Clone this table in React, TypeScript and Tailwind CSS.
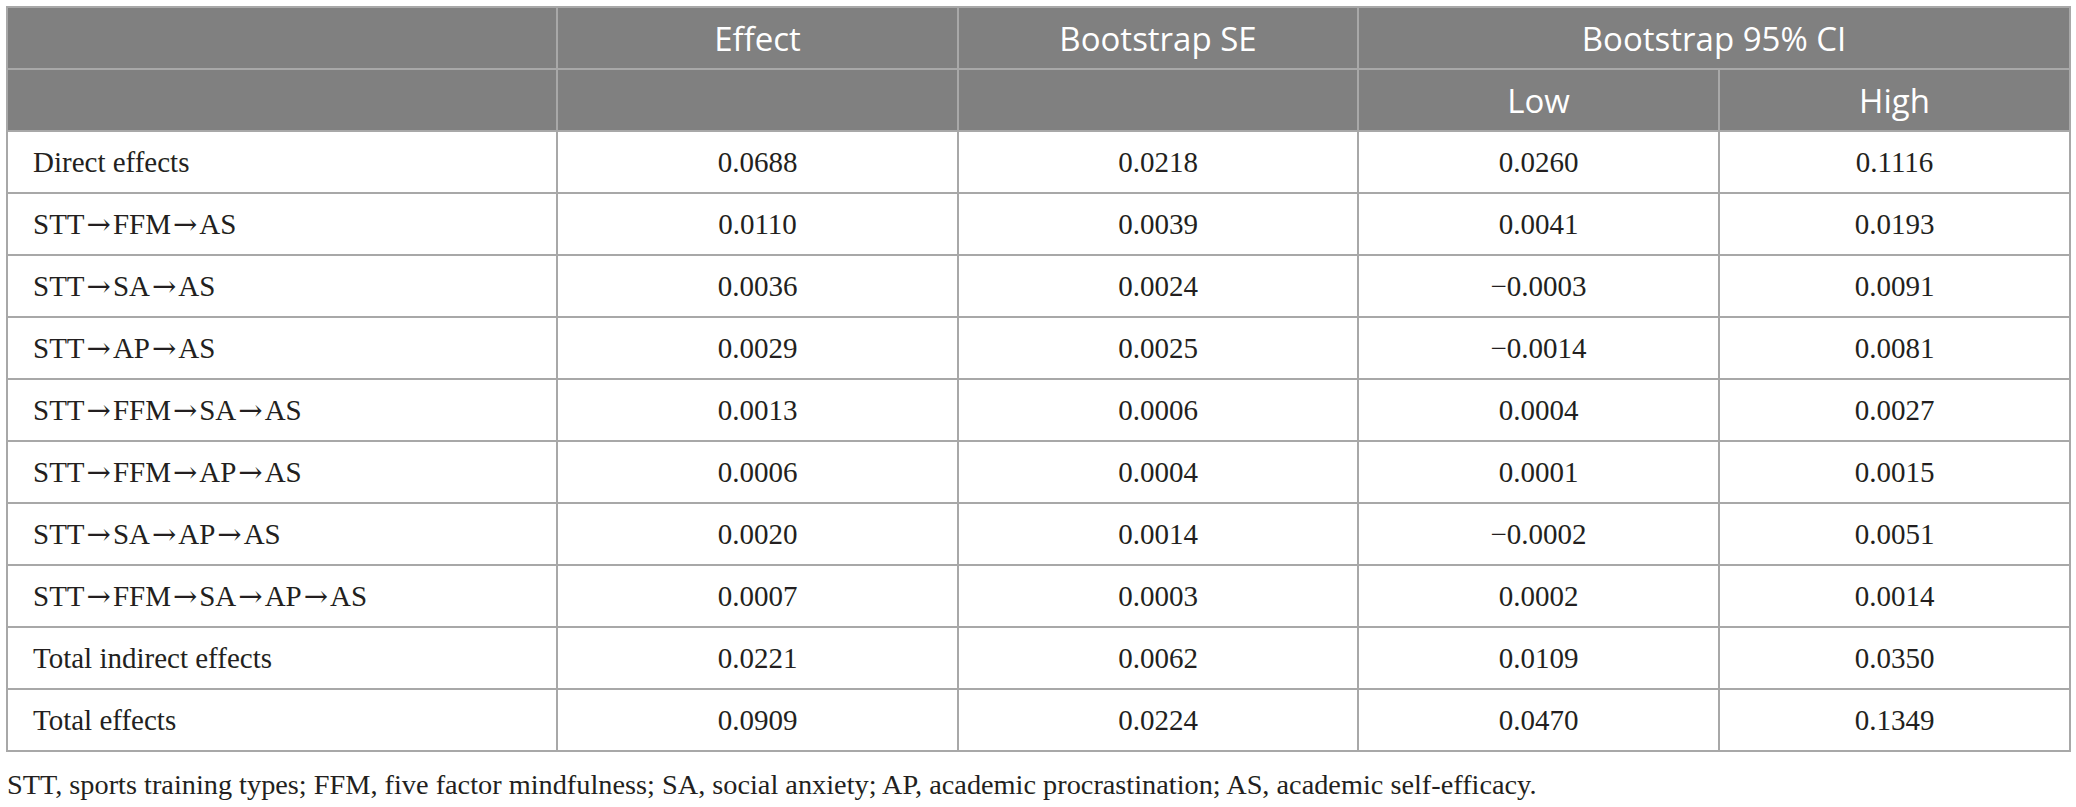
const rows: [string, string, string, string, string][] = [
  ['Direct effects', '0.0688', '0.0218', '0.0260', '0.1116'],
  ['STT→FFM→AS', '0.0110', '0.0039', '0.0041', '0.0193'],
  ['STT→SA→AS', '0.0036', '0.0024', '−0.0003', '0.0091'],
  ['STT→AP→AS', '0.0029', '0.0025', '−0.0014', '0.0081'],
  ['STT→FFM→SA→AS', '0.0013', '0.0006', '0.0004', '0.0027'],
  ['STT→FFM→AP→AS', '0.0006', '0.0004', '0.0001', '0.0015'],
  ['STT→SA→AP→AS', '0.0020', '0.0014', '−0.0002', '0.0051'],
  ['STT→FFM→SA→AP→AS', '0.0007', '0.0003', '0.0002', '0.0014'],
  ['Total indirect effects', '0.0221', '0.0062', '0.0109', '0.0350'],
  ['Total effects', '0.0909', '0.0224', '0.0470', '0.1349'],
]

const th =
  'h-[62px] border-2 border-[#a8a8a8] bg-[#808080] p-0 text-center align-middle font-normal text-white'

// arrows in Liberation Serif come out tiny, so swap the font for them
const Label = ({ text }: { text: string }) => {
  const parts = text.split('→')
  return (
    <>
      {parts.map((p, i) => (
        <span key={i}>
          {i > 0 && (
            <span className="mx-[2px] font-['DejaVu_Serif',serif] text-[29px]">
              →
            </span>
          )}
          {p}
        </span>
      ))}
    </>
  )
}

export default function App() {
  return (
    <div className="min-h-[807px] w-[2076px] bg-white pl-[6px] pt-[6px]">
      <table className="w-[2063px] table-fixed border-collapse">
        <colgroup>
          <col className="w-[550px]" />
          <col className="w-[401px]" />
          <col className="w-[400px]" />
          <col className="w-[361px]" />
          <col className="w-[351px]" />
        </colgroup>
        <thead className="font-['Open_Sans',sans-serif] text-[33px] leading-none">
          <tr>
            <th className={th}></th>
            <th className={th}>Effect</th>
            <th className={th}>Bootstrap SE</th>
            <th className={th} colSpan={2}>
              Bootstrap 95% CI
            </th>
          </tr>
          <tr>
            <th className={th}></th>
            <th className={th}></th>
            <th className={th}></th>
            <th className={th}>Low</th>
            <th className={th}>High</th>
          </tr>
        </thead>
        <tbody className="font-['Liberation_Serif',serif] text-[29px] leading-none text-[#231f20]">
          {rows.map((r) => (
            <tr key={r[0]}>
              <td className="h-[62px] border-2 border-[#a8a8a8] pl-[25px] align-middle">
                <Label text={r[0]} />
              </td>
              {r.slice(1).map((v, i) => (
                <td
                  key={i}
                  className="h-[62px] border-2 border-[#a8a8a8] text-center align-middle"
                >
                  {v}
                </td>
              ))}
            </tr>
          ))}
        </tbody>
      </table>
      <p className="mt-[19px] pl-[1px] font-['Liberation_Serif',serif] text-[28.3px] leading-none text-[#231f20]">
        STT, sports training types; FFM, five factor mindfulness; SA, social
        anxiety; AP, academic procrastination; AS, academic self-efficacy.
      </p>
    </div>
  )
}
